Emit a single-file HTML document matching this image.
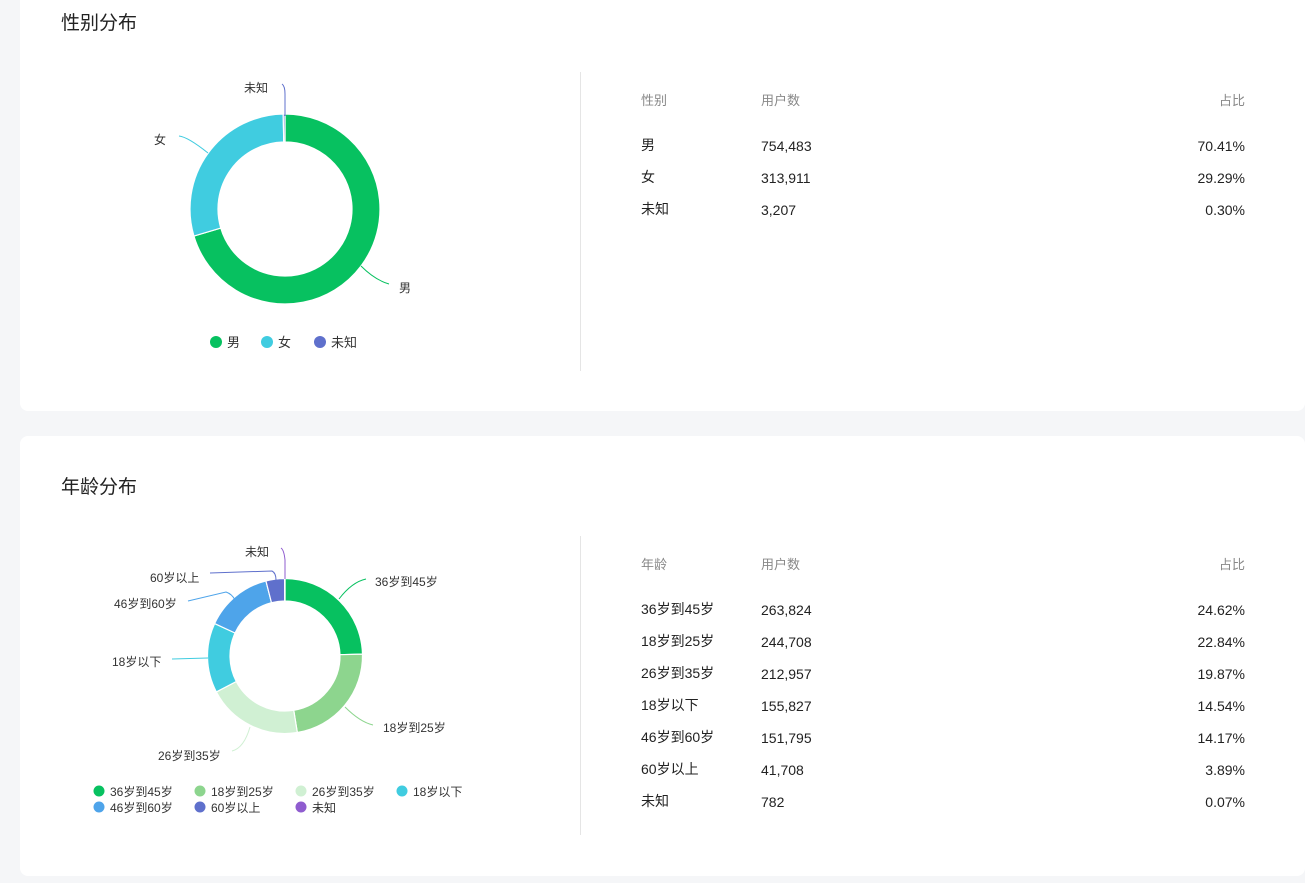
<!DOCTYPE html>
<html><head><meta charset="utf-8">
<style>
*{margin:0;padding:0;box-sizing:border-box}
body{width:1305px;height:883px;background:#f5f6f8;position:relative;overflow:hidden;font-family:"Liberation Sans","Noto Sans CJK SC",sans-serif;color:#222}
.card{position:absolute;left:20px;width:1285px;background:#fff;border-radius:8px}
.t{position:absolute;font-size:19px;color:#222;left:41px}
.div{position:absolute;left:560px;width:1px;background:#e5e5e5}
.tb{position:absolute;left:621px;width:604px;font-size:14px}
.tb div{position:absolute;white-space:nowrap;line-height:16px}
.h{color:#888;font-size:13px}
svg{position:absolute;left:0;top:0}
svg text{font-family:"Liberation Sans","Noto Sans CJK SC",sans-serif;fill:#333}
</style></head><body>
<div class="card" style="top:-10px;height:421px">
 <div class="t" style="top:18px">性别分布</div>
 <div class="div" style="top:82px;height:299px"></div>
</div>
<div class="card" style="top:436px;height:440px">
 <div class="t" style="top:36px">年龄分布</div>
 <div class="div" style="top:100px;height:299px"></div>
</div>
<svg width="1305" height="883" id="s">
 <g id="g1"></g><g id="g2"></g>
 <path d="M282 84 Q285 86 285 94 L285 116" stroke="#5f70cc" fill="none"/>
 <text x="244" y="92" font-size="12">未知</text>
 <path d="M179 136 Q188 137 208 153" stroke="#40cce0" fill="none"/>
 <text x="154" y="144" font-size="12">女</text>
 <path d="M361 266 Q375 280 389 284" stroke="#07c160" fill="none"/>
 <text x="399" y="292" font-size="12">男</text>
 <circle cx="216" cy="342" r="6" fill="#07c160"/><text x="227" y="347" font-size="13">男</text>
 <circle cx="267" cy="342" r="6" fill="#40cce0"/><text x="278" y="347" font-size="13">女</text>
 <circle cx="320" cy="342" r="6" fill="#5f70cc"/><text x="331" y="347" font-size="13">未知</text>
 <path d="M281 548 Q284 550 285 560 L285 579" stroke="#8f5ccf" fill="none"/>
 <text x="245" y="556" font-size="12">未知</text>
 <path d="M210 573 L272 571 Q276 573 276 580" stroke="#5f70cc" fill="none"/>
 <text x="150" y="582" font-size="12">60岁以上</text>
 <path d="M188 601 L226 592 Q232 594 235 600" stroke="#4ea4ea" fill="none"/>
 <text x="114" y="608" font-size="12">46岁到60岁</text>
 <path d="M172 659 L208 658" stroke="#40cce0" fill="none"/>
 <text x="112" y="666" font-size="12">18岁以下</text>
 <path d="M339 599 Q352 582 366 579" stroke="#07c160" fill="none"/>
 <text x="375" y="586" font-size="12">36岁到45岁</text>
 <path d="M345 707 Q360 722 373 725" stroke="#8dd58e" fill="none"/>
 <text x="383" y="732" font-size="12">18岁到25岁</text>
 <path d="M250 727 Q244 748 232 751" stroke="#d0f0d3" fill="none"/>
 <text x="158" y="760" font-size="12">26岁到35岁</text>
 <g font-size="12">
 <circle cx="99" cy="791" r="5.5" fill="#07c160"/><text x="110" y="796">36岁到45岁</text>
 <circle cx="200" cy="791" r="5.5" fill="#8dd58e"/><text x="211" y="796">18岁到25岁</text>
 <circle cx="301" cy="791" r="5.5" fill="#d0f0d3"/><text x="312" y="796">26岁到35岁</text>
 <circle cx="402" cy="791" r="5.5" fill="#40cce0"/><text x="413" y="796">18岁以下</text>
 <circle cx="99" cy="807" r="5.5" fill="#4ea4ea"/><text x="110" y="812">46岁到60岁</text>
 <circle cx="200" cy="807" r="5.5" fill="#5f70cc"/><text x="211" y="812">60岁以上</text>
 <circle cx="301" cy="807" r="5.5" fill="#8f5ccf"/><text x="312" y="812">未知</text>
 </g>
</svg>
<div class="tb" style="top:0;left:641px;width:604px;height:883px">
 <div class="h" style="left:0;top:93px">性别</div><div class="h" style="left:120px;top:93px">用户数</div><div class="h" style="right:0;top:93px">占比</div>
 <div style="left:0;top:137px">男</div><div style="left:120px;top:138px">754,483</div><div style="right:0;top:138px">70.41%</div>
 <div style="left:0;top:169px">女</div><div style="left:120px;top:170px">313,911</div><div style="right:0;top:170px">29.29%</div>
 <div style="left:0;top:201px">未知</div><div style="left:120px;top:202px">3,207</div><div style="right:0;top:202px">0.30%</div>
 <div class="h" style="left:0;top:557px">年龄</div><div class="h" style="left:120px;top:557px">用户数</div><div class="h" style="right:0;top:557px">占比</div>
 <div style="left:0;top:601px">36岁到45岁</div><div style="left:120px;top:602px">263,824</div><div style="right:0;top:602px">24.62%</div>
 <div style="left:0;top:633px">18岁到25岁</div><div style="left:120px;top:634px">244,708</div><div style="right:0;top:634px">22.84%</div>
 <div style="left:0;top:665px">26岁到35岁</div><div style="left:120px;top:666px">212,957</div><div style="right:0;top:666px">19.87%</div>
 <div style="left:0;top:697px">18岁以下</div><div style="left:120px;top:698px">155,827</div><div style="right:0;top:698px">14.54%</div>
 <div style="left:0;top:729px">46岁到60岁</div><div style="left:120px;top:730px">151,795</div><div style="right:0;top:730px">14.17%</div>
 <div style="left:0;top:761px">60岁以上</div><div style="left:120px;top:762px">41,708</div><div style="right:0;top:762px">3.89%</div>
 <div style="left:0;top:793px">未知</div><div style="left:120px;top:794px">782</div><div style="right:0;top:794px">0.07%</div>
</div>
<script>
function donut(id,cx,cy,R,r,data){
 var g=document.getElementById(id),a=0,h='';
 data.forEach(function(d){
  var b=a+d[0]/100*2*Math.PI;
  function p(rr,t){return (cx+rr*Math.sin(t)).toFixed(2)+' '+(cy-rr*Math.cos(t)).toFixed(2)}
  var l=(b-a)>Math.PI?1:0;
  h+='<path d="M'+p(R,a)+' A'+R+' '+R+' 0 '+l+' 1 '+p(R,b)+' L'+p(r,b)+' A'+r+' '+r+' 0 '+l+' 0 '+p(r,a)+'Z" fill="'+d[1]+'" stroke="#fff" stroke-width="1.2"/>';
  a=b;});
 g.innerHTML=h;
}
donut('g1',285,209,95,67,[[70.41,'#07c160'],[29.29,'#40cce0'],[0.30,'#5f70cc']]);
donut('g2',285,656,77.5,55,[[24.62,'#07c160'],[22.84,'#8dd58e'],[19.87,'#d0f0d3'],[14.54,'#40cce0'],[14.17,'#4ea4ea'],[3.89,'#5f70cc'],[0.07,'#8f5ccf']]);
</script>
</body></html>
